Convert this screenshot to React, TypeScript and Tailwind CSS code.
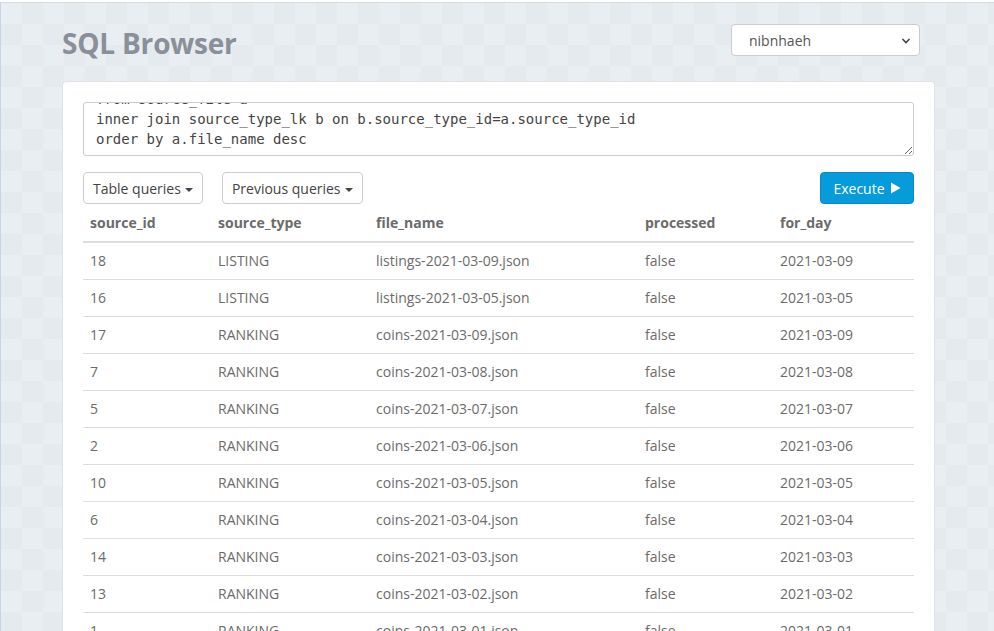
import { useEffect, useRef } from "react";

const rows = [
  ["18", "LISTING", "listings-2021-03-09.json", "false", "2021-03-09"],
  ["16", "LISTING", "listings-2021-03-05.json", "false", "2021-03-05"],
  ["17", "RANKING", "coins-2021-03-09.json", "false", "2021-03-09"],
  ["7", "RANKING", "coins-2021-03-08.json", "false", "2021-03-08"],
  ["5", "RANKING", "coins-2021-03-07.json", "false", "2021-03-07"],
  ["2", "RANKING", "coins-2021-03-06.json", "false", "2021-03-06"],
  ["10", "RANKING", "coins-2021-03-05.json", "false", "2021-03-05"],
  ["6", "RANKING", "coins-2021-03-04.json", "false", "2021-03-04"],
  ["14", "RANKING", "coins-2021-03-03.json", "false", "2021-03-03"],
  ["13", "RANKING", "coins-2021-03-02.json", "false", "2021-03-02"],
  ["1", "RANKING", "coins-2021-03-01.json", "false", "2021-03-01"],
  ["3", "RANKING", "coins-2021-02-28.json", "false", "2021-02-28"],
];

const sql = `select a.source_id, b.source_type, a.file_name, a.processed, a.for_day
from source_file a
inner join source_type_lk b on b.source_type_id=a.source_type_id
order by a.file_name desc`;

function Caret() {
  return <span className="ml-1 inline-block h-0 w-0 border-x-4 border-t-4 border-x-transparent border-t-current align-middle" />;
}

export default function App() {
  const ref = useRef<HTMLTextAreaElement>(null);

  useEffect(() => {
    if (ref.current) ref.current.scrollTop = ref.current.scrollHeight;
  }, []);

  return (
    <div
      className="h-[631px] overflow-hidden border-t border-l border-t-[#d3dbe1] border-l-[#c6d4e6] mt-[2px] bg-[#e6ecef] bg-[image:repeating-conic-gradient(#e4eaee_0_25%,#e8eef1_0_50%)] bg-[length:42px_42px] text-[#6b6b6b]"
      style={{ fontFamily: '"Open Sans", "Noto Sans", sans-serif' }}
    >
      <div className="ml-[61px] w-[873px]">
        <div className="flex items-start justify-between pr-[15px] pt-[21px] h-[78px]">
          <h1 className="text-[28px] leading-[38px] font-bold text-[#8a8f99] tracking-[-0.2px]">SQL Browser</h1>
          <div className="relative w-[189px] h-[32px] rounded-[4px] border border-[#cccccc] bg-white">
            <span className="absolute left-[17px] top-[5px] text-[14px] text-[#555]">nibnhaeh</span>
            <svg className="absolute right-[8px] top-[12px]" width="10" height="8" viewBox="0 0 10 8">
              <path d="M1.5 2 L5 5.5 L8.5 2" fill="none" stroke="#444" strokeWidth="1.6" />
            </svg>
          </div>
        </div>

        <div className="rounded-[4px] border border-[#dde3e8] bg-white px-[20px] pt-[20px] pb-[20px]">
          <textarea
            ref={ref}
            readOnly
            defaultValue={sql}
            className="block w-full h-[54px] resize-y rounded-[3px] border border-[#cccccc] px-[12px] pt-[2px] pb-[6px] text-[14px] leading-[20px] text-[#444] whitespace-pre overflow-y-scroll outline-none"
            style={{ fontFamily: '"DejaVu Sans Mono", monospace' }}
          />

          <div className="mt-[16px] flex items-center">
            <button className="h-[32px] rounded-[4px] border border-[#cccccc] bg-white px-[9px] text-[14px] text-[#444]">
              Table queries<Caret />
            </button>
            <button className="ml-[19px] h-[32px] rounded-[4px] border border-[#cccccc] bg-white px-[9px] text-[14px] text-[#444]">
              Previous queries<Caret />
            </button>
            <button className="ml-auto h-[32px] w-[94px] rounded-[4px] border border-[#0789c4] bg-[#069bdb] text-[14px] text-white flex items-center justify-center gap-[5px]">
              Execute
              <svg width="11" height="12" viewBox="0 0 11 12">
                <path d="M1 0.5 L10.5 6 L1 11.5 Z" fill="white" />
              </svg>
            </button>
          </div>

          <table className="mt-[1px] w-full table-fixed border-collapse text-[14px] leading-[20px]">
            <thead>
              <tr className="border-b-2 border-[#dddddd] text-left text-[#6b6b6b]">
                <th className="w-[128px] px-[7px] py-[8px] font-bold">source_id</th>
                <th className="w-[158px] px-[7px] py-[8px] font-bold">source_type</th>
                <th className="w-[269px] px-[7px] py-[8px] font-bold">file_name</th>
                <th className="w-[135px] px-[7px] py-[8px] font-bold">processed</th>
                <th className="px-[7px] py-[8px] font-bold">for_day</th>
              </tr>
            </thead>
            <tbody>
              {rows.map((r, i) => (
                <tr key={i} className={i === 0 ? "" : "border-t border-[#dddddd]"}>
                  {r.map((c, j) => (
                    <td key={j} className="px-[7px] py-[8px] text-[#6b6b6b]">
                      {c}
                    </td>
                  ))}
                </tr>
              ))}
            </tbody>
          </table>
        </div>
      </div>
    </div>
  );
}
